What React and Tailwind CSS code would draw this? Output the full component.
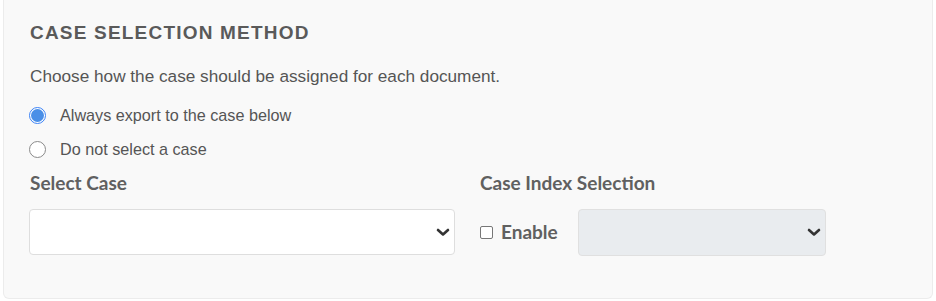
import { useState } from 'react';

function Chevron() {
  return (
    <svg width="14" height="9" viewBox="0 0 14 9" className="shrink-0">
      <path d="M2 2 L7 6.5 L12 2" fill="none" stroke="#333" strokeWidth="2.6" strokeLinecap="round" strokeLinejoin="round" />
    </svg>
  );
}

function Radio({ checked, label, onClick }) {
  return (
    <div className="flex items-center h-[34px] cursor-pointer" onClick={onClick}>
      <span
        className={
          checked
            ? 'w-[17px] h-[17px] rounded-full border border-[#3b82f6] bg-white flex items-center justify-center'
            : 'w-[17px] h-[17px] rounded-full border border-[#8a8a8a] bg-white'
        }
      >
        {checked && <span className="w-[13px] h-[13px] rounded-full bg-[#4a8fe7]" />}
      </span>
      <span className="ml-[14px] text-[16.2px] text-[#555]">{label}</span>
    </div>
  );
}

export default function App() {
  const [mode, setMode] = useState('always');

  return (
    <div className="w-[936px] h-[301px] bg-white px-[3px] font-['Liberation_Sans',Arial,sans-serif]">
      <div className="h-[299px] bg-[#f9f9f9] border border-t-0 border-[#ececec] rounded-b-[6px] pl-[25px] pt-[20px]">
        <h2 className="text-[19px] font-bold tracking-[1.2px] text-[#5a5a5a] leading-[26px] pl-[1px]">
          CASE SELECTION METHOD
        </h2>
        <p className="mt-[19px] text-[17.2px] text-[#555] leading-[22px] pl-[1px]">
          Choose how the case should be assigned for each document.
        </p>
        <div className="mt-[11px]">
          <Radio checked={mode === 'always'} label="Always export to the case below" onClick={() => setMode('always')} />
          <Radio checked={mode === 'none'} label="Do not select a case" onClick={() => setMode('none')} />
        </div>
        <div className="flex mt-[5px] font-['Lato',sans-serif]">
          <div className="w-[426px]">
            <div className="text-[19px] font-bold text-[#606060] leading-[24px] pl-[1px]">Select Case</div>
            <div className="mt-[14px] h-[46px] bg-white border border-[#dedede] rounded-[4px] flex items-center justify-end pr-[4px]">
              <Chevron />
            </div>
          </div>
          <div className="ml-[25px]">
            <div className="text-[19px] font-bold text-[#606060] leading-[24px]">Case Index Selection</div>
            <div className="mt-[14px] flex items-center">
              <span className="w-[13px] h-[13px] border border-[#777] rounded-[2px] bg-white" />
              <span className="ml-[8px] text-[19px] font-bold text-[#606060]">Enable</span>
              <div className="ml-[20px] w-[248px] h-[47px] bg-[#e9ecef] border border-[#e0e0e0] rounded-[4px] flex items-center justify-end pr-[4px]">
                <Chevron />
              </div>
            </div>
          </div>
        </div>
      </div>
    </div>
  );
}
